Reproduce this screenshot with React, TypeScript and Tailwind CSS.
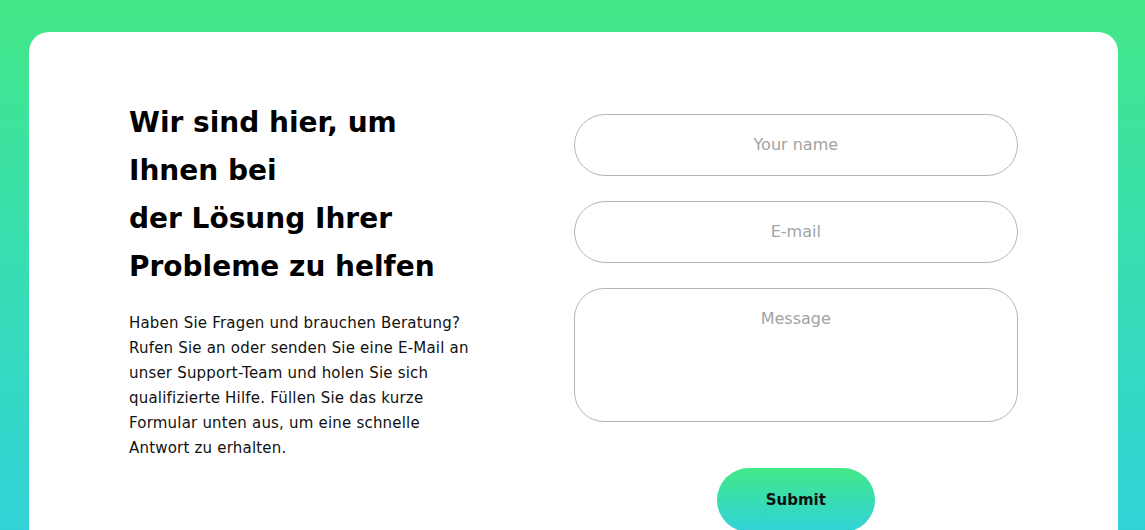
import React from "react";

export default function App() {
  return (
    <div className="h-[530px] w-full overflow-hidden bg-gradient-to-b from-[#43e786] to-[#33d2d8] pt-[32px] pl-[29px] pr-[27px] font-['DejaVu_Sans',sans-serif]">
      <div className="h-[560px] rounded-[20px] bg-white px-[100px] pt-[67px]">
        <div className="grid grid-cols-2">
          <div>
            <h1 className="text-[28px] font-bold leading-[48px] text-black">
              Wir sind hier, um
              <br />
              Ihnen bei
              <br />
              der Lösung Ihrer
              <br />
              Probleme zu helfen
            </h1>
            <p className="mt-[20px] w-[355px] text-[15px] leading-[25px] tracking-[0.2px] text-[#111]">
              Haben Sie Fragen und brauchen Beratung? Rufen Sie an oder senden
              Sie eine E-Mail an unser Support-Team und holen Sie sich
              qualifizierte Hilfe. Füllen Sie das kurze Formular unten aus, um
              eine schnelle Antwort zu erhalten.
            </p>
          </div>
          <form className="mt-[15px] flex flex-col items-center">
            <input
              placeholder="Your name"
              className="h-[62px] w-full rounded-full border border-[#b5b5b5] pb-[2px] text-center text-[16px] text-[#333] outline-none placeholder:text-[#a3a3a3]"
            />
            <input
              placeholder="E-mail"
              className="mt-[25px] h-[62px] w-full rounded-full border border-[#b5b5b5] pb-[2px] text-center text-[16px] text-[#333] outline-none placeholder:text-[#a3a3a3]"
            />
            <textarea
              placeholder="Message"
              className="mt-[25px] h-[134px] w-full resize-none rounded-[30px] border border-[#b5b5b5] pt-[18px] text-center text-[16px] text-[#333] outline-none placeholder:text-[#a3a3a3]"
            />
            <button
              type="button"
              className="mt-[46px] h-[64px] w-[158px] rounded-full bg-gradient-to-b from-[#43e786] to-[#33d2d8] text-[15px] font-bold text-[#111]"
            >
              Submit
            </button>
          </form>
        </div>
      </div>
    </div>
  );
}
